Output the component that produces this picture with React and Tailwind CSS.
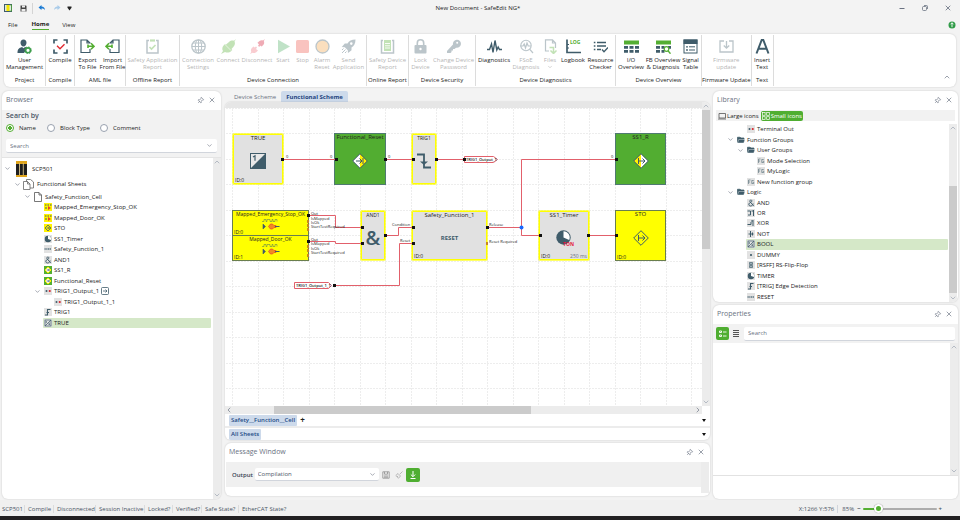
import React, { useState } from "react";
import { ChevronDown, ChevronLeft, ChevronRight, ChevronUp, Pin, X } from "lucide-react";

const DARK = "#3f5c6a";
const GREEN = "#54ae32";
const WIRE = "#e2606b";

/* ---------- ribbon icons ---------- */

function Svg({ children, className = "size-[15px]" }) {
  return (
    <svg viewBox="0 0 15 15" className={className} fill="none" stroke={DARK} aria-hidden="true">
      {children}
    </svg>
  );
}

const ribbonIcons = {
  user: (
    <Svg>
      <path d="M6.500 .5c2 0 3 1.300 3 3.200 0 1.800-1.100 3.800-3 3.800s-3-2-3-3.800C3.500 1.800 4.500 .5 6.500 .5zM.5 14c0-4 1.500-5 4.500-6l1.500 1.200L8 8c1.500.5 2 .8 2.500 1.300L7 14z" fill={DARK} stroke="none" />
      <circle cx="11" cy="11.300" r="2.400" stroke="#3f9e4d" strokeWidth="1.600" fill="#fff" />
      <circle cx="11" cy="11.300" r="3.400" stroke="#3f9e4d" strokeWidth="1" strokeDasharray="1.300 1.370" />
    </Svg>
  ),
  compile: (
    <Svg>
      <path d="M1 4.500V1h3.500M10.500 1H14v3.500M14 10.500V14h-3.500M4.500 14H1v-3.500" strokeWidth="1.700" />
      <path d="M4 6.800l3 3 4.500-4.600" stroke="#e0262d" strokeWidth="1.300" />
    </Svg>
  ),
  exportFile: (
    <Svg>
      <path d="M10 4.500V4L7 1H1v12.500h9V10M7 1v3h3" strokeWidth="1.200" />
      <path d="M7.500 7.300h6.500M11 4.300l3 3-3 3M8 5.500v3.600" stroke={GREEN} strokeWidth="1.600" />
    </Svg>
  ),
  importFile: (
    <Svg>
      <path d="M5 4.500V4l3-3h6v12.500H5V10M8 1v3H5" strokeWidth="1.200" />
      <path d="M7.500 7.300H1M4 4.300l-3 3 3 3M7 5.500v3.600" stroke={GREEN} strokeWidth="1.600" />
    </Svg>
  ),
  offlineReport: (
    <Svg>
      <path d="M4 1.500H2V14h11V1.500h-2" strokeWidth="1.500" />
      <path d="M5 1.500h5" stroke={GREEN} strokeWidth="2.200" />
      <path d="M4.500 8l2 2L10.500 6" stroke={GREEN} strokeWidth="1.600" />
    </Svg>
  ),
  globe: (
    <Svg>
      <circle cx="7.500" cy="7.500" r="6.700" strokeWidth="1.300" />
      <ellipse cx="7.500" cy="7.500" rx="3.200" ry="6.700" />
      <path d="M1 7.500h13M2 4h11M2 11h11M7.500 1v13" />
    </Svg>
  ),
  connect: (
    <Svg>
      <path d="M0 15l2-3C.5 10 1.500 7.500 3 6l1-1 .800.800L8 3c1.500-1.500 3.500-1.800 5-1.300L15 0l-1.500 2.500c.8 1.500.5 3.500-.8 5L10.500 10l.8 1-1 1C8.500 13.800 6 14 4 13z" fill={GREEN} stroke="none" />
      <path d="M4 5.500l6 6" stroke="#fff" strokeWidth=".6" />
    </Svg>
  ),
  disconnect: (
    <Svg>
      <path d="M15 0l-1.200 2c.7 1.500.4 3-.6 4l-1.500 1.500L10 6.500 9.300 8 8 6.800 9 5.500 7.500 3.800 9.500 2c1-.9 2.500-1 3.500-.6z" fill="#d3122e" stroke="none" />
      <path d="M0 15l1.300-2c-.7-1.500-.4-3 .6-4l1.600-1.500 1.200 1L6 7.500 7 8.600 6 10l2 1.500-1.800 1.800c-1 .9-2.500 1-3.700.4z" fill="#f0707c" stroke="none" />
    </Svg>
  ),
  start: (
    <Svg>
      <path d="M2 .8l12 6.700L2 14.200z" fill="#4caf62" stroke="none" />
    </Svg>
  ),
  stop: (
    <Svg>
      <rect x="1" y="1" width="13" height="13" rx="1.500" fill="#f0564a" stroke="none" />
    </Svg>
  ),
  alarm: (
    <Svg>
      <circle cx="7.500" cy="7.500" r="6.500" fill="#f6a548" strokeWidth="1.300" />
    </Svg>
  ),
  rocket: (
    <Svg>
      <path d="M14.500 .5C10.500.5 8 2 6.500 4.500H3.800L.8 8l3 .3 3 3L7 14l3.500-2.800V8.500C13 7 14.500 4.500 14.500.5zM10.300 3.300a1.300 1.300 0 110 2.600 1.300 1.300 0 010-2.600z" fill={DARK} fillRule="evenodd" stroke="none" />
      <path d="M1 14l3.500-3.500M1 11l1.500-1.500M4 14l1.500-1.500" />
    </Svg>
  ),
  onlineReport: (
    <Svg>
      <path d="M3 1.500H1.500V14h12V1.500H12" strokeWidth="1.500" />
      <path d="M4 1h7v11H4z" fill={GREEN} stroke="none" />
      <path d="M5 4.500h5M5 6.800h5M5 9h5" stroke="#fff" strokeWidth=".9" />
    </Svg>
  ),
  lock: (
    <Svg>
      <path d="M4.300 7V4a3.200 3.200 0 016.400 0v3" strokeWidth="1.600" />
      <rect x="1.500" y="6" width="12" height="8.500" rx="1" fill={DARK} stroke="none" />
      <circle cx="7.500" cy="10" r="1.200" fill="#fff" stroke="none" />
    </Svg>
  ),
  key: (
    <Svg>
      <path d="M1 12l6-6.500a4 4 0 113 3.200L8.500 10H7v1.500H5.500V13l-1 1H1z" fill={DARK} stroke="none" />
      <circle cx="11.200" cy="3.800" r="1" fill="#fff" stroke="none" />
    </Svg>
  ),
  diagnostics: (
    <Svg>
      <path d="M0 10.500h2.500L4.500 5 6 13.500 8 1.500 9.800 11l1.400-3 1.300 2.500H15" strokeWidth="1.400" />
    </Svg>
  ),
  fsoe: (
    <Svg>
      <circle cx="7" cy="6.500" r="5.200" strokeWidth="1.100" />
      <path d="M10.800 10.300L14 14M1 7h3l1.200-2L6.500 9 8 4l1.200 3H12" strokeWidth="1.200" />
    </Svg>
  ),
  files: (
    <Svg>
      <path d="M6 12H2.500V.8h7L12.500 4v5M9.500.8V4h3" strokeWidth="1.200" />
      <path d="M6.500 8.500h4V14M7.500 11.500l3 3 3-3" stroke={GREEN} strokeWidth="1.500" />
    </Svg>
  ),
  logbook: (
    <Svg>
      <path d="M1 .5V13.500h14" strokeWidth="1.700" />
      <path d="M1 5.500h2M1 9h2" />
      <text x="4" y="5" fontSize="5" fontWeight="700" fill={GREEN} stroke="none" fontFamily="Open Sans">LOG</text>
    </Svg>
  ),
  resource: (
    <Svg>
      <path d="M4 3.500h9M4 7h9M4 10.500h4" strokeWidth="1.500" />
      <path d="M.8 3.500h1.600M.8 7h1.600M.8 10.500h1.600" strokeWidth="1.500" />
      <path d="M9 10.500l2 2.200L15 8.500" strokeWidth="1.300" />
    </Svg>
  ),
  ioTable: (
    <Svg>
      <rect x="0" y="1.500" width="15" height="4" fill={GREEN} stroke="none" />
      <path d="M0 8.300h4M5.500 8.300h4M11 8.300h4M0 12.300h4M5.500 12.300h4M11 12.300h4" strokeWidth="2.800" />
    </Svg>
  ),
  fbTable: (
    <Svg>
      <rect x="0" y="1.500" width="15" height="4" fill={GREEN} stroke="none" />
      <path d="M0 8.300h4M5.500 8.300h3M0 12.300h4M5.500 12.300h3M12 8.300h3" strokeWidth="2.800" />
      <circle cx="10.500" cy="10" r="2.300" stroke={GREEN} strokeWidth="1.200" fill="#fff" />
      <path d="M12 11.800l2.500 2.900" stroke={GREEN} strokeWidth="1.400" />
    </Svg>
  ),
  signal: (
    <Svg>
      <rect x="1" y="1" width="13" height="13" strokeWidth="1" />
      <rect x=".5" y=".5" width="14" height="4.500" fill={DARK} stroke="none" />
      <path d="M6 7.800h6M6 11h6" />
      <circle cx="4" cy="7.800" r=".9" fill={DARK} stroke="none" />
      <circle cx="4" cy="11" r=".9" fill={DARK} stroke="none" />
    </Svg>
  ),
  firmware: (
    <Svg>
      <path d="M5 2H1v11h13V2h-4" strokeWidth="1.300" />
      <path d="M7.500 2v7M4.800 6.500l2.700 2.700 2.700-2.700" strokeWidth="1.300" />
    </Svg>
  ),
  insertText: (
    <Svg>
      <path d="M1.500 14.500L6.700 1h1.600l5.200 13.500M3.600 9.800h7.800" strokeWidth="2" />
    </Svg>
  ),
};

const ribbonGroups = [
  { name: "Project", items: [["user", "User", "Management", "w-[41px]", true]] },
  { name: "Compile", items: [["compile", "Compile", "", "w-7", true]] },
  {
    name: "AML file",
    items: [
      ["exportFile", "Export", "To File", "w-[25px]", true],
      ["importFile", "Import", "From File", "w-[25px]", true],
    ],
  },
  { name: "Offline Report", items: [["offlineReport", "Safety Application", "Report", "w-[53px]", false]] },
  {
    name: "Device Connection",
    items: [
      ["globe", "Connection", "Settings", "w-9", false],
      ["connect", "Connect", "", "w-6", false],
      ["disconnect", "Disconnect", "", "w-[34px]", false],
      ["start", "Start", "", "w-[18px]", false],
      ["stop", "Stop", "", "w-[21px]", false],
      ["alarm", "Alarm", "Reset", "w-[18px]", false],
      ["rocket", "Send", "Application", "w-[35px]", false],
    ],
  },
  { name: "Online Report", items: [["onlineReport", "Safety Device", "Report", "w-[41px]", false]] },
  {
    name: "Device Security",
    items: [
      ["lock", "Lock", "Device", "w-[23px]", false],
      ["key", "Change Device", "Password", "w-[43px]", false],
    ],
  },
  {
    name: "Device Diagnostics",
    items: [
      ["diagnostics", "Diagnostics", "", "w-9", true],
      ["fsoe", "FSoE", "Diagnosis", "w-7", false],
      ["files", "Files", "v", "w-5", false],
      ["logbook", "Logbook", "", "w-[26px]", true],
      ["resource", "Resource", "Checker", "w-[29px]", true],
    ],
  },
  {
    name: "Device Overview",
    items: [
      ["ioTable", "I/O", "Overview", "w-[30px]", true],
      ["fbTable", "FB Overview", "& Diagnosis", "w-[34px]", true],
      ["signal", "Signal", "Table", "w-[21px]", true],
    ],
  },
  { name: "Firmware Update", items: [["firmware", "Firmware", "update", "w-12", false]] },
  { name: "Text", items: [["insertText", "Insert", "Text", "w-[21px]", true]] },
];

function Ribbon() {
  return (
    <div className="mx-1 flex items-stretch rounded-md bg-white shadow-[0_0_2px_#00000030]">
      {ribbonGroups.map((group) => (
        <section key={group.name} className="my-px flex flex-col items-center border-r border-[#dcdcdc] pt-1 pb-[2px]">
          <div className="flex">
            {group.items.map(([icon, top, bottom, width, enabled]) => (
              <button
                key={icon}
                disabled={!enabled}
                className={`flex flex-col items-center gap-[3px] whitespace-nowrap leading-[7px] disabled:opacity-35 ${width}`}
              >
                {ribbonIcons[icon]}
                <span className="flex h-[14px] flex-col items-center">
                  <span>{top}</span>
                  {bottom === "v" ? <ChevronDown className="size-[6px]" /> : <span>{bottom}</span>}
                </span>
              </button>
            ))}
          </div>
          <h2 className="mt-[6px] whitespace-nowrap leading-[7px]">{group.name}</h2>
        </section>
      ))}
      <button aria-label="Collapse ribbon" className="mr-[5px] mb-[6px] ml-auto self-end text-gray-500">
        <ChevronUp className="size-2" />
      </button>
    </div>
  );
}

function TitleBar() {
  return (
    <header>
      <div className="flex h-4 items-center px-1">
        <div className="flex flex-1 items-center">
          <svg viewBox="0 0 8 8" className="size-2" aria-hidden="true">
            <rect x=".5" y=".5" width="7" height="7" fill="#dce8e2" stroke={DARK} />
            <rect x="2.500" y="1" width="3" height="6" fill="#f5e600" />
            <path d="M5.500 1h2v6h-2" fill="none" stroke={GREEN} strokeWidth=".7" />
          </svg>
          <button aria-label="Save" className="ml-2">
            <svg viewBox="0 0 7 7" className="size-[7px]">
              <path d="M.5.5h5.500l.5.500v5.500h-6z" fill="#444" />
              <path d="M2 .5h3v2H2zM1.500 4h4v2.500h-4z" fill="#eee" />
            </svg>
          </button>
          <span className="mx-[5px] h-[11px] w-px bg-[#d4d4d4]" />
          <button aria-label="Undo">
            <svg viewBox="0 0 8 8" className="size-2">
              <path d="M3.500 1L.5 3.500l3 2.500V4.500c2 0 3 .5 3.500 1.700C7 4 5.500 2.700 3.500 2.500z" fill="#1b7bd4" />
            </svg>
          </button>
          <button aria-label="Redo" className="ml-[7px]">
            <svg viewBox="0 0 8 8" className="size-2">
              <path d="M4.500 1l3 2.500-3 2.500V4.500C2.500 4.500 1.500 5 1 6.200 1 4 2.500 2.700 4.500 2.500z" fill="#a9cbe9" />
            </svg>
          </button>
          <button aria-label="Customize toolbar" className="ml-[6px]">
            <svg viewBox="0 0 5 5" className="size-[5px]">
              <path d="M.5 .5h4v1.300L2.500 4.500.5 1.800z" fill="#222" />
            </svg>
          </button>
        </div>
        <h1>New Document - SafeEdit NG*</h1>
        <div className="flex flex-1 items-center justify-end gap-[15px] pr-1 text-gray-500">
          <button aria-label="Minimize">
            <svg viewBox="0 0 8 8" className="size-2" stroke="currentColor"><path d="M1.500 4.500h5" /></svg>
          </button>
          <button aria-label="Restore">
            <svg viewBox="0 0 8 8" className="size-2" stroke="currentColor" strokeWidth=".8" fill="none">
              <rect x="1.500" y="2.500" width="4" height="4" rx="1" />
              <path d="M3 1.500h2.500q1 0 1 1V5" />
            </svg>
          </button>
          <button aria-label="Close"><X className="size-2" strokeWidth={2.500} /></button>
        </div>
      </div>
      <nav className="flex h-[17px] items-center pl-2">
        <button className="h-[11px]">File</button>
        <button className="ml-[14px] h-[11px] border-b border-[#54ae32] font-bold">Home</button>
        <button className="ml-[13px] h-[11px]">View</button>
        <button aria-label="Help" className="mr-1 ml-auto">
          <svg viewBox="0 0 8 8" className="size-2">
            <circle cx="4" cy="4" r="3.500" fill="#2e9a46" />
            <path d="M4 1.800v4.400M2.500 3.300L4 1.800l1.500 1.500" stroke="#fff" fill="none" strokeWidth=".9" />
          </svg>
        </button>
      </nav>
    </header>
  );
}

/* ---------- shared panel parts ---------- */

function PanelHeader({ title }) {
  return (
    <div className="flex h-[19px] shrink-0 items-center pr-[5px] pb-px pl-1 text-gray-500">
      <h2 className="text-[7px] leading-[10px]">{title}</h2>
      <button aria-label={`Pin ${title}`} className="ml-auto">
        <Pin className="size-[7px] rotate-45" />
      </button>
      <button aria-label={`Close ${title}`} className="ml-1">
        <X className="size-2" />
      </button>
    </div>
  );
}

function VScroll({ children }) {
  return (
    <div className="flex w-2 shrink-0 flex-col items-center bg-[#ececec] text-gray-400">
      <ChevronUp className="size-2" />
      {children}
      <ChevronDown className="mt-auto size-2" />
    </div>
  );
}

/* ---------- 8px block icons used by both trees ---------- */

const tileBg = { gray: "#e2e2e2", yellow: "#fff200", green: "#54ae32", none: "none" };

function Tile({ bg = "gray", children }) {
  return (
    <svg viewBox="0 0 16 16" className="size-2 shrink-0" fill="none" stroke={DARK} strokeWidth="1.500" aria-hidden="true">
      <rect width="16" height="16" fill={tileBg[bg]} stroke="none" />
      {children}
    </svg>
  );
}

const tiles = {
  input: (
    <Tile bg="yellow">
      <path d="M2 4h3M7 4h3M12 4h3M2 10h4" strokeWidth="2" />
      <path d="M8 6l6 4-6 4z" fill="#e5442a" stroke="none" />
    </Tile>
  ),
  sto: (
    <Tile bg="yellow">
      <path d="M8 2l6 6-6 6-6-6zM5 8h6M8.500 5.500L11 8l-2.500 2.500" />
    </Tile>
  ),
  timer: (
    <Tile>
      <circle cx="8" cy="8" r="6.500" fill={DARK} stroke="none" />
      <path d="M8 8V1.500A6.500 6.500 0 0114 10z" fill="#fff" stroke="none" />
    </Tile>
  ),
  safety: <Tile><path d="M1 8h14" strokeWidth="3" strokeDasharray="2.500 1" opacity=".8" /></Tile>,
  and: (
    <Tile>
      <path d="M13.500 14L6 5.500C5 4 6 2 7.800 2s2.800 2 1.200 3.500L5 8c-2.500 2-1.500 6 1.800 6 3 0 5-2 5.500-5" strokeWidth="1.900" />
    </Tile>
  ),
  green: (
    <Tile bg="green">
      <path d="M8 2l6 6-6 6-6-6z" fill="#fff" stroke="#fff200" strokeWidth="2" />
      <path d="M5 8h6M8.500 5.500L11 8l-2.500 2.500" />
    </Tile>
  ),
  terminal: (
    <Tile>
      <circle cx="5" cy="8" r="2" fill={DARK} stroke="none" />
      <circle cx="11.500" cy="8" r="2.200" fill="#d8232a" stroke="none" />
    </Tile>
  ),
  trig: <Tile><path d="M2 14h5V3h6M5 9h5" strokeWidth="2.200" /></Tile>,
  bool: (
    <Tile>
      <rect x="2" y="2" width="12" height="12" />
      <path d="M2 14L14 2M4.500 4v4M9 11h3M9 8.500h3" />
    </Tile>
  ),
  fg: <Tile><path d="M3 12V4h4M3 8h3M13.500 5H9.500v6h4V8.500h-2" strokeWidth="1.400" opacity=".75" /></Tile>,
  or: <Tile><path d="M1 4h6v8M2 12h5M13 2v12M9 4h4" strokeWidth="2" /></Tile>,
  xor: <Tile><path d="M1 11h7V6M12 2v12M8 4h4" strokeWidth="2" /></Tile>,
  not: <Tile><path d="M7 2v12M3 8h10M11 5v6" strokeWidth="2" /></Tile>,
  dummy: <Tile><circle cx="8" cy="8" r="2.200" fill={DARK} stroke="none" /></Tile>,
  rsff: <Tile><path d="M5 3h6v4H5zM5 9h6v4H5z" fill="#9eb0b8" strokeWidth="1.300" /></Tile>,
  folder: (
    <Tile bg="none">
      <path d="M1 13V2.500h5L8 4h6v3" fill={DARK} stroke={DARK} />
      <path d="M1 14l2.500-7H16l-2.500 7z" fill={DARK} stroke="#fff" strokeWidth=".8" />
    </Tile>
  ),
};

function TreeRow({ icon, label, indent, open, selected, linked }) {
  return (
    <li className={`flex min-h-0 items-center ${indent}`}>
      <span className="flex w-[9px] shrink-0 items-center">
        {open && <ChevronDown className="size-[7px] text-gray-500" />}
      </span>
      <button
        className={`flex h-full items-center gap-[2px] whitespace-nowrap pl-px ${
          selected ? "flex-1 rounded-[1px] bg-[#d5e8c8]" : ""
        }`}
      >
        {tiles[icon]}
        {label}
        {linked && (
          <svg viewBox="0 0 8 8" className="size-2" fill="none" stroke={DARK} strokeWidth=".8">
            <rect x=".5" y=".5" width="7" height="7" rx="1" />
            <path d="M2 4h4M4.500 2.500L6 4 4.500 5.500" />
          </svg>
        )}
      </button>
    </li>
  );
}

const browserRows = [
  { icon: "input", label: "Mapped_Emergency_Stop_OK" },
  { icon: "input", label: "Mapped_Door_OK" },
  { icon: "sto", label: "STO" },
  { icon: "timer", label: "SS1_Timer" },
  { icon: "safety", label: "Safety_Function_1" },
  { icon: "and", label: "AND1" },
  { icon: "green", label: "SS1_R" },
  { icon: "green", label: "Functional_Reset" },
  { icon: "terminal", label: "TRIG1_Output_1", open: true, linked: true },
  { icon: "terminal", label: "TRIG1_Output_1_1", indent: "pl-[42px]" },
  { icon: "trig", label: "TRIG1" },
  { icon: "bool", label: "TRUE", selected: true },
];

function BrowserPanel() {
  const [searchBy, setSearchBy] = useState("Name");
  return (
    <aside className="flex w-[219px] shrink-0 flex-col overflow-hidden rounded-md bg-white shadow-[0_0_2px_#00000030]">
      <PanelHeader title="Browser" />
      <div className="bg-[#f2f2f2] px-1 pt-px pb-1">
        <fieldset>
          <legend className="text-[7px] leading-[9px] font-semibold text-gray-600">Search by</legend>
          <div className="flex h-4 items-center">
            {[
              ["Name", "w-[41px]"],
              ["Block Type", "w-[53px]"],
              ["Comment", "w-[50px]"],
            ].map(([option, width]) => (
              <label key={option} className={`flex items-center gap-[5px] whitespace-nowrap ${width}`}>
                <input
                  type="radio"
                  name="search-by"
                  checked={searchBy === option}
                  onChange={() => setSearchBy(option)}
                  className="size-2 shrink-0 appearance-none rounded-full border border-gray-400 bg-white checked:border-[#54ae32] checked:bg-[radial-gradient(#54ae32_2px,white_2px)]"
                />
                {option}
              </label>
            ))}
          </div>
        </fieldset>
        <div className="mt-[3px] flex h-[14px] items-center rounded-xs border-b border-gray-300 bg-white px-1">
          <input aria-label="Search browser" placeholder="Search" className="min-w-0 flex-1 outline-none placeholder:text-gray-500" />
          <ChevronDown className="size-[7px] text-gray-500" />
        </div>
      </div>
      <div className="flex min-h-0 flex-1 border-t border-[#e4e4e4]">
        <ul className="min-w-0 flex-1 pr-[2px]">
          <li className="flex h-[21px] items-center pl-[2px]">
            <ChevronDown className="size-[7px] text-gray-500" />
            <svg viewBox="0 0 11 16" className="ml-[5px] h-4 w-[11px]" aria-hidden="true">
              <rect width="11" height="16" fill="#1e1e1e" />
              <path d="M0 0h11v3H0zM0 14h11v2H0z" fill="#e0a51c" />
              <path d="M3.500 2v12M7.300 2v12" stroke="#d8c48a" strokeWidth=".9" />
            </svg>
            <span className="ml-[5px]">SCP501</span>
          </li>
          <li className="flex h-[10px] items-center pl-3">
            <ChevronDown className="size-[7px] text-gray-500" />
            <svg viewBox="0 0 11 11" className="mr-[3px] ml-[2px] size-[11px]" fill="#fff" stroke="#666" strokeWidth=".8" aria-hidden="true">
              <path d="M3.500 .5h4L10.500 3v6h-7z" />
              <path d="M.5 2.500h4L7 5v5.500H.5zM4.500 2.500V5H7" />
            </svg>
            Functional Sheets
          </li>
          <li className="mt-[2px] flex h-[11px] items-center pl-[22px]">
            <ChevronDown className="size-[7px] text-gray-500" />
            <svg viewBox="0 0 8 10" className="mr-[3px] ml-[3px] h-[10px] w-2" fill="#fff" stroke="#555" strokeWidth=".8" aria-hidden="true">
              <path d="M.5 .5h4.500L7.500 3v6.500h-7zM5 .5V3h2.500" />
            </svg>
            Safety_Function_Cell
          </li>
          <li>
            <ul className="grid h-[126px] auto-rows-fr">
              {browserRows.map((row) => (
                <TreeRow key={row.label} indent="pl-8" {...row} />
              ))}
            </ul>
          </li>
        </ul>
        <VScroll />
      </div>
    </aside>
  );
}

const libraryRows = [
  { icon: "terminal", label: "Terminal Out", indent: "pl-[24px]" },
  { icon: "folder", label: "Function Groups", indent: "pl-[14px]", open: true },
  { icon: "folder", label: "User Groups", indent: "pl-[24px]", open: true },
  { icon: "fg", label: "Mode Selection", indent: "pl-[34px]" },
  { icon: "fg", label: "MyLogic", indent: "pl-[34px]" },
  { icon: "fg", label: "New function group", indent: "pl-[24px]" },
  { icon: "folder", label: "Logic", indent: "pl-[14px]", open: true },
  { icon: "and", label: "AND", indent: "pl-[24px]" },
  { icon: "or", label: "OR", indent: "pl-[24px]" },
  { icon: "xor", label: "XOR", indent: "pl-[24px]" },
  { icon: "not", label: "NOT", indent: "pl-[24px]" },
  { icon: "bool", label: "BOOL", indent: "pl-[24px]", selected: true },
  { icon: "dummy", label: "DUMMY", indent: "pl-[24px]" },
  { icon: "rsff", label: "[RSFF] RS-Flip-Flop", indent: "pl-[24px]" },
  { icon: "timer", label: "TIMER", indent: "pl-[24px]" },
  { icon: "trig", label: "[TRIG] Edge Detection", indent: "pl-[24px]" },
  { icon: "safety", label: "RESET", indent: "pl-[24px]" },
];

function LibraryPanel() {
  return (
    <section className="shrink-0 overflow-hidden rounded-md bg-white shadow-[0_0_2px_#00000030]">
      <PanelHeader title="Library" />
      <div className="mx-[3px] flex h-[11px] items-center gap-[2px] bg-[#f2f2f2]">
        <button className="flex items-center gap-px whitespace-nowrap pl-[2px]">
          <svg viewBox="0 0 8 8" className="size-2" fill="none" stroke="#555" strokeWidth=".8">
            <path d="M1 1.500h6.500v4.500H1zM0 7h8" />
          </svg>
          Large icons
        </button>
        <button className="flex h-[10px] items-center gap-px whitespace-nowrap rounded-[2px] bg-[#4fae31] px-px text-white">
          <svg viewBox="0 0 8 8" className="size-2" fill="none" stroke="#fff" strokeWidth=".7">
            <rect x=".5" y=".5" width="2.600" height="2.800" />
            <rect x="4.700" y=".5" width="2.600" height="2.800" />
            <rect x=".5" y="4.700" width="2.600" height="2.800" />
            <rect x="4.700" y="4.700" width="2.600" height="2.800" />
          </svg>
          Small icons
        </button>
      </div>
      <div className="mt-[3px] flex pr-px">
        <ul className="grid h-[178px] min-w-0 flex-1 auto-rows-fr pr-px">
          {libraryRows.map((row) => (
            <TreeRow key={row.label} {...row} />
          ))}
        </ul>
        <VScroll>
          <span className="mt-[54px] h-[107px] w-2 bg-[#cbcbcb]" />
        </VScroll>
      </div>
    </section>
  );
}

function PropertiesPanel() {
  return (
    <section className="flex min-h-0 flex-1 flex-col overflow-hidden rounded-md bg-white shadow-[0_0_2px_#00000030]">
      <PanelHeader title="Properties" />
      <div className="flex h-[19px] shrink-0 items-center bg-[#f2f2f2] px-[3px]">
        <button aria-label="Categorized" className="flex size-[13px] items-center justify-center rounded-[2px] bg-[#4fae31]">
          <svg viewBox="0 0 8 8" className="size-2" fill="none" stroke="#fff">
            <path d="M.5 1h2v1.500h-2zM.5 5h2v1.500h-2zM4 2h3.500M4 6h3.500" strokeWidth=".9" />
          </svg>
        </button>
        <button aria-label="Alphabetical" className="mr-[3px] ml-[2px] p-[2px]">
          <svg viewBox="0 0 6 7" className="h-[7px] w-[6px]" stroke="#555">
            <path d="M0 .5h6M0 2.500h6M0 4.500h6M0 6.500h6" />
          </svg>
        </button>
        <input aria-label="Search properties" placeholder="Search" className="h-[14px] min-w-0 flex-1 rounded-xs border-b border-gray-300 bg-white px-1 outline-none placeholder:text-gray-500" />
      </div>
      <div className="flex min-h-0 flex-1 border-b border-[#e2e2e2]">
        <div className="flex-1" />
        <VScroll />
      </div>
      <div className="h-[23px] shrink-0" />
    </section>
  );
}

/* ---------- functional scheme canvas ---------- */

// Node positions are in canvas pixels, origin at the top left of the sheet.
const nodes = [
  { id: "TRUE", x: 8, y: 26, w: 50, h: 50, kind: "gray", corner: "ID:0" },
  { id: "Functional_Reset", x: 109, y: 25, w: 52, h: 52, kind: "green" },
  { id: "TRIG1", x: 187, y: 26, w: 24, h: 50, kind: "gray", small: true },
  { id: "SS1_R", x: 390, y: 25, w: 51, h: 52, kind: "green" },
  { id: "Mapped_Emergency_Stop_OK", x: 7, y: 102, w: 77, h: 26, kind: "yellow", corner: "ID:0", small: true },
  { id: "Mapped_Door_OK", x: 7, y: 127, w: 77, h: 26, kind: "yellow", corner: "ID:1", small: true },
  { id: "AND1", x: 136, y: 103, w: 24, h: 49, kind: "gray", small: true },
  { id: "Safety_Function_1", x: 187, y: 103, w: 75, h: 49, kind: "gray", corner: "ID:0" },
  { id: "SS1_Timer", x: 314, y: 103, w: 50, h: 49, kind: "gray", corner: "ID:0", right: "250 ms" },
  { id: "STO", x: 390, y: 102, w: 51, h: 51, kind: "yellow", corner: "ID:0" },
];

const kindClass = {
  gray: "bg-[#e1e1e1] border-[#ffff00] rounded-[1px] shadow-[0_0_0_1px_#ffff0099]",
  green: "bg-[#52ad31] border-[#4f7a70]",
  yellow: "bg-[#ffff00] border-[#6a7f4e]",
};

const mappedArt = (
  <svg viewBox="0 0 20 14" className="h-[14px] w-5" fill="none">
    <path d="M1 3.500h2v-2h2v2h1v-2h3v2h2v-2h1v2h2v-2h2v2" stroke="#3b6b66" strokeWidth=".6" opacity=".8" />
    <path d="M2 6v5M2 6l2.500 2.500L2 11" stroke="#3f5c6a" fill="#3f5c6a" strokeWidth=".6" />
    <path d="M7.500 8.500l2-2.500h2l1.500 1.500h2v2h-2L11.500 11h-2z" fill="#f08a24" stroke="#e5442a" strokeWidth=".7" />
    <path d="M14 8.500h4.500" stroke="#3f5c6a" />
  </svg>
);

const nodeArt = {
  TRUE: (
    <svg viewBox="0 0 16 16" className="size-4">
      <rect x=".5" y=".5" width="15" height="15" fill="#e8e8e8" stroke={DARK} />
      <path d="M15.500 .5v15H.5z" fill={DARK} />
      <path d="M3 4l2-1.200v5" stroke={DARK} strokeWidth="1.200" fill="none" />
    </svg>
  ),
  Functional_Reset: (
    <svg viewBox="0 0 16 16" className="size-4" stroke={DARK} fill="none">
      <path d="M8 .7v14.600L.7 8z" fill="#fff" stroke="none" />
      <path d="M8 .7v14.600L15.300 8z" fill="#fff200" stroke="none" />
      <path d="M8 .7L15.300 8 8 15.300.7 8z" />
      <path d="M4 8h6M7.500 5.500L10 8l-2.500 2.500M11 5v6" />
    </svg>
  ),
  TRIG1: (
    <svg viewBox="0 0 16 16" className="size-4" stroke={DARK} fill="none">
      <path d="M1 1.500h7v13h7" strokeWidth="1.800" />
      <path d="M4 8.500h8L8 12z" fill={DARK} stroke="none" />
    </svg>
  ),
  SS1_R: (
    <svg viewBox="0 0 16 16" className="size-4" stroke={DARK} fill="none">
      <path d="M8 .7v14.600L.7 8z" fill="#fff200" stroke="none" />
      <path d="M8 .7v14.600L15.300 8z" fill="#fff" stroke="none" />
      <path d="M8 .7L15.300 8 8 15.300.7 8z" />
      <path d="M5.500 5v6M5.500 8h6.500M9.500 5.500L12 8l-2.500 2.500" />
    </svg>
  ),
  Mapped_Emergency_Stop_OK: mappedArt,
  Mapped_Door_OK: mappedArt,
  AND1: <span className="text-[20px] leading-5 font-semibold text-[#3f5c6a]">&amp;</span>,
  Safety_Function_1: <span className="font-bold text-[#3f5c6a]">RESET</span>,
  SS1_Timer: (
    <svg viewBox="0 0 20 16" className="h-4 w-5">
      <circle cx="9.500" cy="7.500" r="7.200" fill={DARK} />
      <path d="M9.500 7.500V1.200A6.300 6.300 0 0115.200 10z" fill="#fff" />
      <text x="9" y="16" fontSize="5" fontWeight="700" fill="#e3173e" fontFamily="Open Sans">TON</text>
    </svg>
  ),
  STO: (
    <svg viewBox="0 0 16 16" className="size-4" stroke={DARK} fill="none">
      <path d="M8 .7L15.300 8 8 15.300.7 8z" />
      <path d="M5.500 5v6M5.500 8h6.500M9.500 5.500L12 8l-2.500 2.500" />
    </svg>
  ),
};

const wires = [
  "58,51 110,51",
  "161,51 187,51",
  "212,51 238,51",
  "84,107 110,107 110,119 136,119",
  "84,133 110,133 110,135 136,135",
  "160,127 173,127 173,119 187,119",
  "108,177 174,177 174,135 187,135",
  "262,119 296,119",
  "391,51 296,51 296,127 315,127",
  "364,127 391,127",
];

const ports = [
  [57, 51], [111, 51], [160, 51], [188, 51], [211, 51], [239, 51], [391, 51],
  [83, 107], [83, 133], [137, 119], [137, 135], [160, 127], [188, 119], [188, 135],
  [262, 119], [315, 127], [363, 127], [391, 127], [109, 177],
];

const openPorts = [[83, 113], [83, 117], [83, 121], [83, 138], [83, 142], [83, 147], [262, 135]];

const pinLabels = [
  ["0", 61, 46], ["0", 105, 46], ["0", 163, 46], ["0", 386, 46],
  ["Out", 86, 103], ["IsMapped", 86, 108], ["IsOk", 86, 112], ["StartTestRequired", 86, 116],
  ["Out", 86, 129], ["IsMapped", 86, 133], ["IsOk", 86, 138], ["StartTestRequired", 86, 142],
  ["Condition", 167, 114], ["Reset", 175, 130], ["Release", 264, 114], ["Reset Required", 264, 131],
];

function SchemeCanvas() {
  return (
    <div className="relative min-h-0 flex-1 overflow-hidden bg-white">
      <svg className="absolute inset-0 size-full" aria-hidden="true">
        <defs>
          <pattern id="grid" x="7" y="25" width="51" height="51" patternUnits="userSpaceOnUse">
            <path d="M.5 0v51M26.500 0v51M0 .5h51M0 26.500h51" stroke="#ededed" strokeDasharray="2 1" />
          </pattern>
        </defs>
        <rect width="100%" height="100%" fill="url(#grid)" />
      </svg>

      {nodes.map((n) => (
        <div
          key={n.id}
          className={`absolute flex flex-col items-center border ${kindClass[n.kind]}`}
          style={{ left: n.x, top: n.y, width: n.w, height: n.h }}
        >
          <span className={`whitespace-nowrap leading-[7px] ${n.small ? "text-[5px]" : ""}`}>{n.id}</span>
          <span className="absolute inset-0 flex items-center justify-center pt-1">{nodeArt[n.id]}</span>
          <span className="absolute inset-x-px bottom-0 flex justify-between text-[5px] leading-[5px]">
            <span>{n.corner}</span>
            <span className="text-gray-500">{n.right}</span>
          </span>
        </div>
      ))}

      <svg className="absolute inset-0 size-full" fill="none" aria-hidden="true">
        {wires.map((points) => (
          <polyline key={points} points={points} stroke={WIRE} transform="translate(.5 .5)" />
        ))}
        <path d="M239.500 48.500h29l4 3-4 3h-29z" fill="#fff" stroke={WIRE} />
        <path d="M69.500 174.500h34l3 3-3 3h-34z" fill="#fff" stroke={WIRE} />
        {ports.map(([x, y]) => (
          <rect key={`${x}-${y}`} x={x - 1} y={y - 1} width="3" height="3" fill="#111" />
        ))}
        {openPorts.map(([x, y]) => (
          <rect key={`${x}-${y}`} x={x - 1} y={y - 1} width="2" height="3" fill="#c8871f" />
        ))}
        <circle cx="296.500" cy="119.500" r="2" fill="#1769ff" />
      </svg>

      {pinLabels.map(([text, x, y]) => (
        <span
          key={`${x}-${y}`}
          className="absolute whitespace-nowrap text-[4px] leading-[5px]"
          style={{ left: x, top: y }}
        >
          {text}
        </span>
      ))}
      <span className="absolute top-[49px] left-[241px] text-[4px] leading-[5px] font-semibold">TRIG1_Output_1</span>
      <span className="absolute top-[175px] left-[71px] text-[4px] leading-[5px] font-semibold">TRIG1_Output_1_1</span>
    </div>
  );
}

function SheetTabs({ name, canAdd }) {
  return (
    <div className="flex h-3 items-center pr-1 pl-1">
      <button className="h-[11px] rounded-[1px] bg-[#cddaeb] px-[2px] font-semibold text-[#234a86]">{name}</button>
      {canAdd && <button aria-label="Add sheet" className="ml-[3px] text-[8px] font-bold">+</button>}
      <button aria-label={`List ${name}`} className="ml-auto">
        <svg viewBox="0 0 4 3" className="h-[3px] w-1"><path d="M0 0h4L2 3z" fill="#111" /></svg>
      </button>
    </div>
  );
}

function MessageWindow() {
  return (
    <section className="mt-[3px] rounded-md bg-white pb-[3px] shadow-[0_0_2px_#00000030]">
      <PanelHeader title="Message Window" />
      <div className="mx-px flex h-[31px] bg-white">
        <div className="flex h-[25px] flex-1 items-center bg-[#f0f0f0] pl-[6px]">
          <label htmlFor="output" className="font-semibold text-gray-700">Output</label>
          <span className="relative ml-[2px] flex items-center">
            <select id="output" className="h-[13px] w-[124px] appearance-none rounded-xs border-b border-gray-300 bg-white px-[3px] text-gray-600">
              <option>Compilation</option>
            </select>
            <ChevronDown className="pointer-events-none absolute right-[3px] size-[7px] text-gray-500" />
          </span>
          <button aria-label="Save messages" className="ml-[3px]">
            <svg viewBox="0 0 8 8" className="size-2" fill="none" stroke="#8f8f8f" strokeWidth=".8">
              <path d="M.8.8h6.400v6.400H.8zM2.500.8v2.400h3V.8M2 5h4M2 6.200h4" />
            </svg>
          </button>
          <button aria-label="Clear messages" className="ml-[5px]">
            <svg viewBox="0 0 8 8" className="size-2" fill="none" stroke="#a9a9a9" strokeWidth=".8">
              <path d="M7.500.5L5 3M3 2.500L5.500 5M3 2.500L.8 4.500 3.500 7.200 5.500 5M2 6l1.200-1.200" />
            </svg>
          </button>
          <button aria-label="Scroll to end" className="ml-[3px] flex size-[14px] items-center justify-center rounded-[2px] bg-[#4fae31]">
            <svg viewBox="0 0 8 8" className="size-2" fill="none" stroke="#fff">
              <path d="M4 0v5.500M1.800 3.500L4 5.700l2.200-2.200M1.500 7.500h5" />
            </svg>
          </button>
        </div>
        <span className="w-2 bg-[#ececec]" />
      </div>
    </section>
  );
}

function SchemeArea() {
  return (
    <main className="flex min-w-0 flex-1 flex-col">
      <nav className="flex h-[11px] items-stretch pl-[9px]">
        <button className="text-gray-500">Device Scheme</button>
        <button className="ml-[5px] rounded-t-[2px] bg-[#cddaeb] px-[5px] font-bold text-[#1f4480]">Functional Scheme</button>
      </nav>
      <section className="flex min-h-0 flex-1 flex-col overflow-hidden rounded-md bg-white shadow-[0_0_2px_#00000030]">
        <div className="flex min-h-0 flex-1">
          <div className="flex min-w-0 flex-1 flex-col">
            <div className="h-[6px] bg-[#e6e6e6]" />
            <SchemeCanvas />
          </div>
          <VScroll>
            <span className="h-[139px] w-2 bg-[#cbcbcb]" />
          </VScroll>
        </div>
        <div className="mr-2 flex h-2 items-center bg-[#ececec] text-gray-500">
          <ChevronLeft className="size-2" />
          <span className="ml-[41px] h-2 w-[257px] bg-[#cbcbcb]" />
          <ChevronRight className="ml-auto size-2" />
        </div>
        <SheetTabs name="Safety__Function__Cell" canAdd />
        <div className="h-[2px] bg-[#ececec]" />
        <SheetTabs name="All Sheets" />
      </section>
      <MessageWindow />
    </main>
  );
}

const statusItems = [
  ["SCP501", "w-[23px] border-r"],
  ["Compile", "w-[26px] border-r"],
  ["Disconnected", "w-[39px] border-r"],
  ["Session Inactive", "w-[46px] border-r"],
  ["Locked?", "w-[25px] border-r"],
  ["Verified?", "w-[26px] border-r"],
  ["Safe State?", "w-[34px] border-r"],
  ["EtherCAT State?", ""],
];

function StatusBar() {
  const [zoom, setZoom] = useState(18);
  return (
    <footer className="flex h-4 items-center bg-[#f0f0f0] pt-px pr-[18px] pl-[2px] text-gray-600">
      <div className="flex gap-[3px]">
        {statusItems.map(([text, style]) => (
          <span key={text} className={`border-[#dcdcdc] whitespace-nowrap ${style}`}>
            {text}
          </span>
        ))}
      </div>
      <span className="ml-auto border-r border-gray-300 pr-[3px]">X:1266 Y:576</span>
      <label htmlFor="zoom" className="mr-[3px] ml-1">85%</label>
      <button aria-label="Zoom out" className="font-bold">−</button>
      <input
        id="zoom"
        type="range"
        min="0"
        max="100"
        value={zoom}
        onChange={(e) => setZoom(Number(e.target.value))}
        className="mx-[2px] h-[2px] w-[74px] appearance-none rounded-full bg-[linear-gradient(90deg,#54ae32_18%,#adadad_18%)] [&::-webkit-slider-thumb]:size-[9px] [&::-webkit-slider-thumb]:appearance-none [&::-webkit-slider-thumb]:rounded-full [&::-webkit-slider-thumb]:border-2 [&::-webkit-slider-thumb]:border-white [&::-webkit-slider-thumb]:bg-[#54ae32] [&::-webkit-slider-thumb]:shadow-[0_0_1px_#00000080]"
      />
      <button aria-label="Zoom in" className="font-bold">+</button>
    </footer>
  );
}

export default function App() {
  return (
    <div className="flex h-screen flex-col bg-[#f3f3f3] font-['Open_Sans','Noto_Sans',sans-serif] text-[6px] leading-[8px] text-[#222]">
      <TitleBar />
      <div className="pt-px">
        <Ribbon />
      </div>
      <div className="flex min-h-0 flex-1 px-[2px] pt-1">
        <div className="flex pb-px">
          <BrowserPanel />
        </div>
        <div className="flex min-w-0 flex-1 pr-[3px] pb-1 pl-1">
          <SchemeArea />
        </div>
        <div className="flex w-[245px] shrink-0 flex-col gap-[3px] pb-px">
          <LibraryPanel />
          <PropertiesPanel />
        </div>
      </div>
      <StatusBar />
      <div className="h-1 bg-[#222022]" />
    </div>
  );
}
